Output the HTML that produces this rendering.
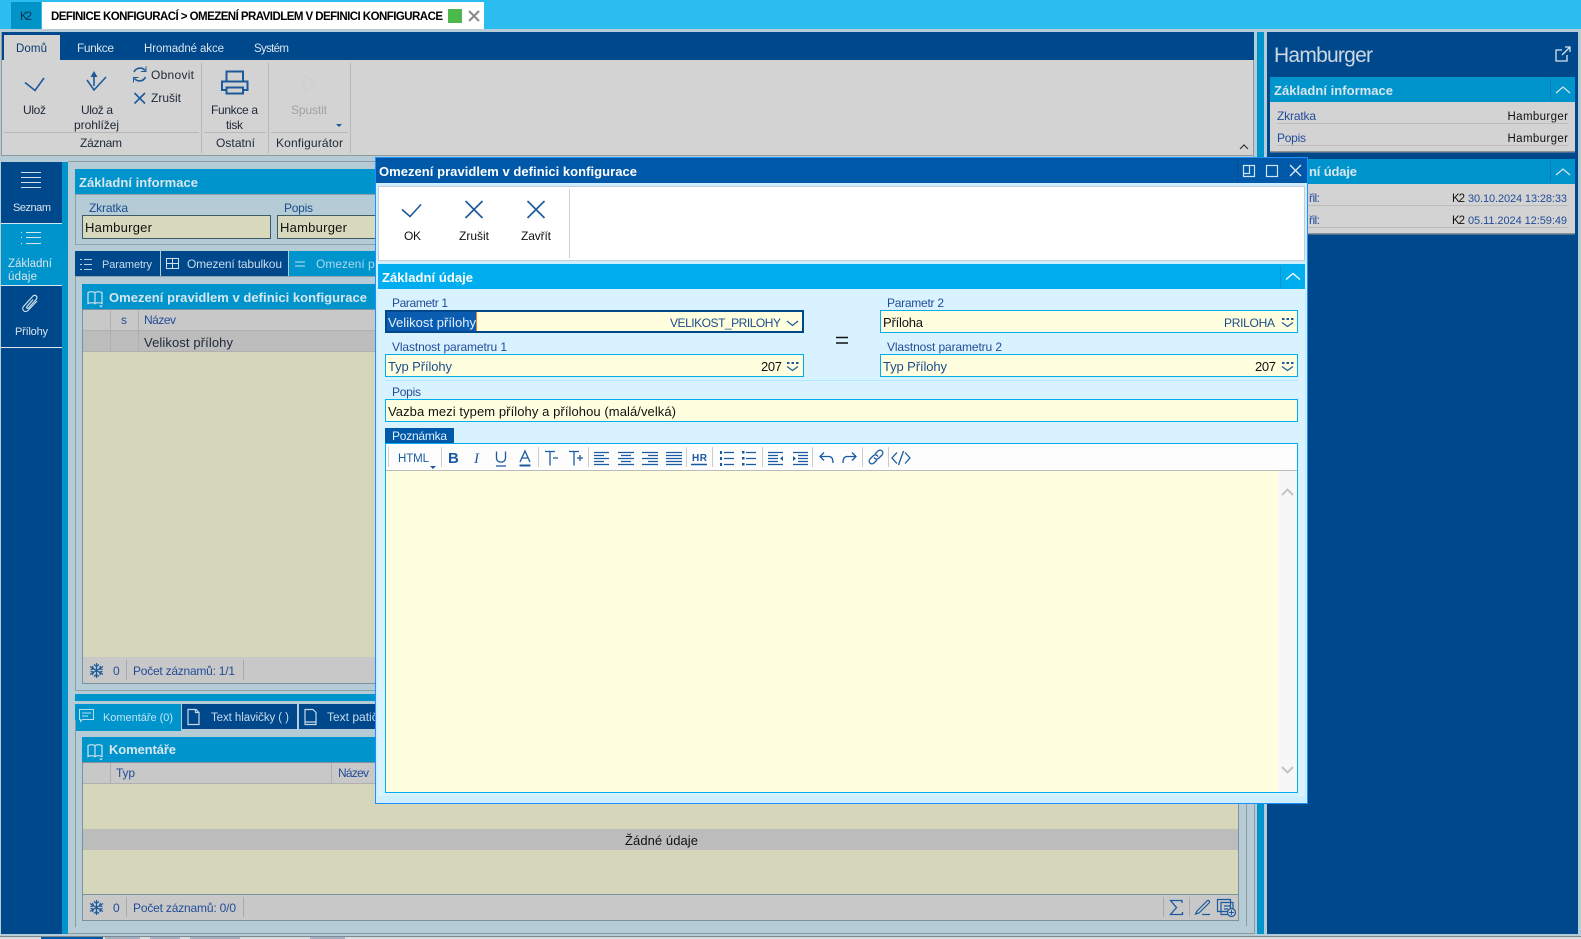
<!DOCTYPE html>
<html lang="cs"><head><meta charset="utf-8"><title>Omezení pravidlem v definici konfigurace</title>
<style>
html,body{margin:0;padding:0;width:1581px;height:939px;overflow:hidden;background:#b5cbd6}
svg{display:block}
text{font-family:"Liberation Sans",sans-serif;font-size:12px;fill:#202a3a;white-space:pre}
.b{font-weight:bold;font-size:13px;fill:#d8e6ee}
.w{font-weight:bold;font-size:13px;fill:#fff}
.l{fill:#234c98}
.n{fill:#1c4c8c}
.k{fill:#111}
.t{fill:#d8e4ec}
.m{font-size:13px}
.s{font-size:11px}
.h{font-size:11.5px}
.ic{fill:none;stroke:#1c5a9a;stroke-width:1.6}
.ie{fill:none;stroke:#1a5aa0;stroke-width:1.3}
.il{fill:none;stroke:#d0e0ea;stroke-width:1.2}
</style></head><body>
<svg width="1581" height="939" viewBox="0 0 1581 939" xmlns="http://www.w3.org/2000/svg">
<rect width="1581" height="939" fill="#b5cbd6"/>
<!-- top bar -->
<rect width="1581" height="29" fill="#2bbcf0"/>
<rect x="11" y="2" width="30" height="27" fill="#0094c8"/>
<text x="20" y="20" textLength="12" class="h" style="fill:#0a3050">K2</text>
<rect x="42" y="2" width="442" height="27" fill="#fff"/>
<text x="51" y="20" textLength="392" style="font-weight:bold;font-size:11.5px;fill:#000">DEFINICE KONFIGURACÍ &gt; OMEZENÍ PRAVIDLEM V DEFINICI KONFIGURACE</text>
<rect x="448" y="9" width="14" height="14" fill="#4cb84c"/>
<path d="M469 11l10 10M479 11l-10 10" stroke="#888" stroke-width="2" fill="none"/>
<!-- ribbon -->
<rect x="1" y="32" width="1253" height="28" fill="#00488c"/>
<rect x="1" y="60" width="1253" height="96" fill="#d3d3d3"/>
<rect x="1" y="155" width="1253" height="1" fill="#8e9a9e"/>
<rect x="1" y="32" width="1" height="124" fill="#8e9a9e"/>
<rect x="1253" y="60" width="1" height="96" fill="#8e9a9e"/>
<rect x="4" y="35" width="56" height="25" fill="#d3d3d3"/>
<text x="16" y="52" textLength="31" class="h" style="fill:#0c3a70">Domů</text>
<text x="77" y="52" textLength="37" class="t">Funkce</text>
<text x="144" y="52" textLength="80" class="t h">Hromadné akce</text>
<text x="254" y="52" textLength="35" class="t h">Systém</text>
<path d="M25 82.500L35 90.500L44 78" class="ic"/>
<path d="M87 80L94 90L106 77M94 74V86" class="ic"/><path d="M90.500 77L94 71L97.500 77Z" fill="#1c5a9a"/>
<path d="M134 72a6.500 6.500 0 0 1 11-1.500M145.500 77a6.500 6.500 0 0 1-11 1.500" class="ic"/><path d="M146 66.500v5h-5M133.500 82.500v-5h5" fill="none" stroke="#1c5a9a" stroke-width="1"/>
<path d="M134.500 93l10.500 10.500M145 93l-10.500 10.500" class="ic"/>
<path d="M226.500 81V71.500H243V81M226.500 90H222V81.500H247.500V90H243M226.500 87.500H243V93.500H226.500Z" fill="none" stroke="#1c5a9a" stroke-width="2"/>
<text x="23" y="114" textLength="23">Ulož</text>
<text x="81" y="114" textLength="32">Ulož a</text>
<text x="74" y="129" textLength="45">prohlížej</text>
<text x="151" y="79" textLength="43">Obnovit</text>
<text x="151" y="102" textLength="30">Zrušit</text>
<text x="211" y="114" textLength="47">Funkce a</text>
<text x="226" y="129" textLength="17">tisk</text>
<text x="291" y="114" textLength="36" style="fill:#a2a2a2">Spustit</text>
<path d="M304 75.500V91L317 83Z" fill="none" stroke="#cfcfcf" stroke-width="1.500"/>
<path d="M336 124h6l-3 3z" fill="#1c5a9a"/>
<text x="80" y="147" textLength="42">Záznam</text>
<text x="216" y="147" textLength="39">Ostatní</text>
<text x="276" y="147" textLength="67">Konfigurátor</text>
<path d="M4 132.500H199M204 132.500H266M271 132.500H348" stroke="#b8b8b8"/>
<path d="M201.500 63V153M268.500 63V153M350.500 63V153" stroke="#b8b8b8"/>
<path d="M1240 149l4-4 4 4" fill="none" stroke="#333" stroke-width="1.200"/>
<!-- side strip + right panel -->
<rect x="1257" y="32" width="7" height="902" fill="#0094cc"/>
<rect x="1267" y="32" width="311" height="902" fill="#00488c"/>
<text x="1274" y="62" textLength="99" style="font-size:21px;fill:#cdd8e2">Hamburger</text>
<path d="M1562 50h-6v11h11v-6M1562 55l8-8M1565 47h5v5" fill="none" stroke="#d8e4ec" stroke-width="1.300"/>
<rect x="1270" y="77" width="305" height="25" fill="#0094cc"/>
<rect x="1270" y="102" width="305" height="50" fill="#d3d3d3"/><rect x="1270" y="151" width="305" height="1.500" fill="#8a9498"/>
<text x="1274" y="95" textLength="119" class="b">Základní informace</text>
<path d="M1550.500 79V100" stroke="#0a7cb0"/><path d="M1556 93l7-6 7 6" fill="none" stroke="#d8e6ee" stroke-width="1.200"/>
<text x="1277" y="120" textLength="39" class="l">Zkratka</text><text x="1507.500" y="120" textLength="60.500" class="k h">Hamburger</text>
<text x="1277" y="142" textLength="29" class="l">Popis</text><text x="1507.500" y="142" textLength="60.500" class="k h">Hamburger</text>
<path d="M1277 123.500H1568M1277 145.500H1568" stroke="#bcbcbc"/>
<rect x="1270" y="159" width="305" height="25" fill="#0094cc"/>
<rect x="1270" y="184" width="305" height="50" fill="#d3d3d3"/><rect x="1270" y="233" width="305" height="1.500" fill="#8a9498"/>
<text x="1309" y="176" textLength="48" class="b">ní údaje</text>
<path d="M1550.500 161V182" stroke="#0a7cb0"/><path d="M1556 175l7-6 7 6" fill="none" stroke="#d8e6ee" stroke-width="1.200"/>
<text x="1309" y="202" textLength="11" class="l">řil:</text><text x="1309" y="224" textLength="11" class="l">řil:</text>
<text x="1452" y="202" textLength="13" class="k h">K2</text><text x="1468" y="202" textLength="99" class="l s">30.10.2024 13:28:33</text>
<text x="1452" y="224" textLength="13" class="k h">K2</text><text x="1468" y="224" textLength="99" class="l s">05.11.2024 12:59:49</text>
<path d="M1277 205.500H1568M1277 227.500H1568" stroke="#bcbcbc"/>
<!-- left nav -->
<rect x="1" y="162" width="61" height="772" fill="#00488c"/>
<rect x="62" y="162" width="6" height="772" fill="#0094cc"/>
<rect x="68" y="161" width="1186" height="1" fill="#8e9a9e"/>
<rect x="1" y="224" width="61" height="61" fill="#0094cc"/>
<path d="M1 223.500H62M1 285.500H62M1 347.500H62" stroke="#d8e8f0"/>
<path d="M21 172.500H41M21 177.500H41M21 182.500H41M21 187.500H41" stroke="#d0e0ea"/>
<text x="13" y="211" textLength="38" class="t s">Seznam</text>
<path d="M21 232.500h1M26 232.500H41M21 237.500h1M26 237.500H41M21 243.500h1M26 243.500H41" stroke="#d0e8f4"/>
<text x="8" y="267" textLength="44" class="t h">Základní</text><text x="8" y="280" textLength="29" class="t h">údaje</text>
<path d="M37 301l-9 9.500c-3 3-7-1-4.500-4l9-10c2-2.500 5.500-.5 4 2.500l-8 9c-1 1-2.500 0-1.500-1.500l6-7" fill="none" stroke="#d0e0ea" stroke-width="1.200"/>
<text x="15" y="335" textLength="33" class="t s">Přílohy</text>
<!-- upper panel -->
<rect x="75" y="169" width="1171" height="25" fill="#0094cc"/>
<rect x="75.500" y="194.500" width="1170" height="50" fill="none" stroke="#8ea2ac"/>
<text x="79" y="187" textLength="119" class="b">Základní informace</text>
<text x="89" y="212" textLength="39" style="fill:#1c4c8c">Zkratka</text><text x="284" y="212" textLength="29" style="fill:#1c4c8c">Popis</text>
<rect x="82.500" y="215.500" width="188" height="23" fill="#d8d8bc" stroke="#3c5c6c"/>
<rect x="277.500" y="215.500" width="188" height="23" fill="#d8d8bc" stroke="#3c5c6c"/>
<text x="85" y="232" textLength="67" class="k m">Hamburger</text><text x="280" y="232" textLength="67" class="k m">Hamburger</text>
<!-- tabs -->
<rect x="75" y="251" width="85" height="25" fill="#00488c"/>
<rect x="161" y="251" width="127" height="25" fill="#00488c"/>
<rect x="289" y="251" width="100" height="25" fill="#0094cc"/>
<path d="M80 259.500h2M84 259.500h8M80 264.500h2M84 264.500h8M80 269.500h2M84 269.500h8" stroke="#b8d0e0"/>
<text x="102" y="268" textLength="50" class="s" style="fill:#c8dcea">Parametry</text>
<path d="M166.500 258.500h12v10h-12zM166.500 263.500h12M172.500 258.500v10" fill="none" stroke="#d0e0ea"/>
<text x="187" y="268" textLength="95" style="fill:#c8dcea">Omezení tabulkou</text>
<path d="M295 262h10M295 266h10" stroke="#80c8e8" stroke-width="1.500"/>
<text x="316" y="268" style="fill:#a8d8f0">Omezení pravidlem</text>
<rect x="75.500" y="276.500" width="1170" height="414" fill="none" stroke="#8ea2ac"/>
<!-- grid 1 -->
<rect x="82" y="284" width="1157" height="25" fill="#0094cc"/>
<path d="M95 292.500c-2-1-5-1-7 0v11c2-1 5-1 7 0zm0 0c2-1 5-1 7 0v11c-2-1-5-1-7 0z" class="il"/><path d="M99 305.500h4l-2 2z" fill="#d0e0ea"/>
<text x="109" y="302" textLength="258" class="b">Omezení pravidlem v definici konfigurace</text>
<rect x="82" y="309" width="1157" height="22" fill="#c8c8c8"/>
<rect x="82" y="331" width="1157" height="21" fill="#bcbcbc"/>
<rect x="82" y="352" width="1157" height="305" fill="#d6d6bb"/>
<path d="M110.500 309V352M138.500 309V352M82 330.500H1239M82 351.500H1239" stroke="#b0b0b0"/>
<text x="121" y="324" textLength="6" class="l">s</text>
<text x="144" y="324" textLength="32" class="l">Název</text>
<text x="144" y="347" textLength="89" class="m">Velikost přílohy</text>
<rect x="82" y="657" width="1157" height="27" fill="#c8c8c8"/>
<rect x="82.500" y="309.500" width="1156" height="374" fill="none" stroke="#7c929c"/>
<path d="M96.500 663v15M90 666.500l13 8M103 666.500l-13 8M94 664.500l2.500 2 2.500-2M94 676.500l2.500-2 2.500 2M90.500 669.500l3-.5-1-3M102.500 669.500l-3-.5 1-3M90.500 671.500l3 .5-1 3M102.500 671.500l-3 .5 1 3" fill="none" stroke="#1c5a9a" stroke-width="1.200"/>
<text x="113" y="675" textLength="6" class="l">0</text>
<text x="133" y="675" textLength="102" class="l">Počet záznamů: 1/1</text>
<path d="M126.500 660V680M243.500 660V680" stroke="#aaa"/>
<!-- lower -->
<rect x="75" y="694" width="1171" height="7" fill="#0094cc"/>
<rect x="75" y="704" width="106" height="27" fill="#0094cc"/>
<rect x="182" y="704" width="115" height="25" fill="#00488c"/>
<rect x="299" y="704" width="100" height="25" fill="#00488c"/>
<path d="M79.500 709.500h14v10h-11l-2 2v-2h-1zM82 713h9M82 716h6" fill="none" stroke="#b8dcec"/>
<text x="103" y="721" textLength="70" class="s" style="fill:#c0e4f4">Komentáře (0)</text>
<path d="M188 709.500h8l3 3v12h-11zM195.500 709.500v3h3" fill="none" stroke="#c8d8e4" stroke-width="1.200"/>
<text x="211" y="721" textLength="78" class="h" style="fill:#c8dcea">Text hlavičky ( )</text>
<path d="M305 709.500h8l3 3v12h-11zM305 722h11" fill="none" stroke="#c8d8e4" stroke-width="1.200"/>
<text x="327" y="721" style="fill:#c8dcea">Text patičky ( )</text>
<rect x="82" y="737" width="1157" height="25" fill="#0094cc"/>
<path d="M95 745.500c-2-1-5-1-7 0v11c2-1 5-1 7 0zm0 0c2-1 5-1 7 0v11c-2-1-5-1-7 0z" class="il"/><path d="M99 758.500h4l-2 2z" fill="#d0e0ea"/>
<text x="109" y="754" textLength="67" class="b">Komentáře</text>
<rect x="82" y="762" width="1157" height="22" fill="#c8c8c8"/>
<rect x="82" y="784" width="1157" height="110" fill="#d6d6bb"/>
<rect x="82" y="829" width="1157" height="21" fill="#bcbcbc"/>
<path d="M110.500 762V784M331.500 762V784M82 783.500H1239" stroke="#b0b0b0"/>
<text x="116" y="777" textLength="19" class="l">Typ</text><text x="338" y="777" textLength="31" class="l">Název</text>
<text x="625" y="845" textLength="73" class="k m">Žádné údaje</text>
<rect x="82" y="894" width="1157" height="27" fill="#c8c8c8"/>
<rect x="82.500" y="762.500" width="1156" height="158" fill="none" stroke="#7c929c"/>
<path d="M82 894.500H1239" stroke="#7c929c"/>
<path d="M96.500 900v15M90 903.500l13 8M103 903.500l-13 8M94 901.500l2.500 2 2.500-2M94 913.500l2.500-2 2.500 2M90.500 906.500l3-.5-1-3M102.500 906.500l-3-.5 1-3M90.500 908.500l3 .5-1 3M102.500 908.500l-3 .5 1 3" fill="none" stroke="#1c5a9a" stroke-width="1.200"/>
<text x="113" y="912" textLength="6" class="l">0</text>
<text x="133" y="912" textLength="103" class="l">Počet záznamů: 0/0</text>
<path d="M126.500 897V917M243.500 897V917M1163.500 897V917M1189.500 897V917" stroke="#aaa"/>
<path d="M1182 903v-2.500h-11.500l6 7-6 7h12V912" fill="none" stroke="#1a5aa0" stroke-width="1.300"/>
<path d="M1197 911l10-10c1.500-1.500 3.500.5 2 2l-10 10-3.500 1zM1202 914.500h8" fill="none" stroke="#1a5aa0" stroke-width="1.200"/>
<path d="M1217.500 899.500h13v12h-13zM1221 902.500h12v12h-12zM1224 906h7M1224 909h4" fill="#c8c8c8" stroke="#1a5aa0" stroke-width="1.200"/><circle cx="1231.500" cy="912.500" r="4" fill="#c8c8c8" stroke="#1a5aa0" stroke-width="1.200"/><path d="M1229 912.500h5M1231.500 910v5" stroke="#1a5aa0"/>
<path d="M75.500 720V927M1246.500 694V926" stroke="#8e9a9e"/>
<path d="M68 933.500H1254M1254.500 156V934" stroke="#8e9a9e"/>
<!-- bottom -->
<rect y="934" width="1581" height="2" fill="#b5cbd6"/>
<rect y="936" width="1581" height="1" fill="#7e8a90"/>
<rect y="937" width="1581" height="2" fill="#d6dde0"/>
<rect x="41" y="937" width="62" height="2" fill="#0058a8"/>
<path d="M105 938H140M150 938H180M190 938H240M310 938H345" stroke="#6a80a0"/>
<!-- modal -->
<rect x="375" y="157" width="933" height="647" fill="#cceeff"/>
<rect x="375.500" y="157.500" width="932" height="646" fill="none" stroke="#1e90ff"/>
<rect x="376" y="158" width="931" height="25" fill="#0058a8"/>
<text x="379" y="176" textLength="258" class="w">Omezení pravidlem v definici konfigurace</text>
<path d="M1237.500 160V181" stroke="#0a4a90"/>
<path d="M1243.500 165.500h11v11h-11zM1243.500 173.500h6v-8" fill="none" stroke="#d0e4f4" stroke-width="1.200"/>
<rect x="1266.500" y="165.500" width="11" height="11" fill="none" stroke="#d0e4f4" stroke-width="1.200"/>
<path d="M1290 165l11 11M1301 165l-11 11" stroke="#e0ecf6" stroke-width="1.300"/>
<rect x="378.500" y="186.500" width="926" height="74" fill="#fff" stroke="#c8ccd0" stroke-width="1"/>
<path d="M569.500 189V258" stroke="#d0d0d0"/>
<path d="M402 209.500L410 216.500L421 204.500" class="ic"/>
<path d="M465.500 201l17 17M482.500 201l-17 17M527.500 201l17 17M544.500 201l-17 17" class="ic"/>
<text x="404" y="240" textLength="17" class="k">OK</text>
<text x="459" y="240" textLength="30" class="k">Zrušit</text>
<text x="521" y="240" textLength="30" class="k">Zavřít</text>
<rect x="378" y="264" width="927" height="25" fill="#00aeef"/>
<rect x="378" y="289" width="927" height="507" fill="#d8f2ff"/>
<text x="382" y="282" textLength="91" class="w">Základní údaje</text>
<path d="M1280.500 266V287" stroke="#0a94cc"/><path d="M1286 279.500l7-6 7 6" fill="none" stroke="#fff" stroke-width="1.300"/>
<text x="392" y="307" textLength="56" class="l">Parametr 1</text>
<text x="887" y="307" textLength="57" class="l">Parametr 2</text>
<rect x="386" y="311" width="417" height="21" fill="#ffffe0" stroke="#00488c" stroke-width="2"/>
<rect x="387" y="312" width="89" height="19" fill="#0a5cb0"/><rect x="476" y="312" width="1" height="19" fill="#f08020"/>
<text x="388" y="327" textLength="88" class="m" style="fill:#e4f0fa">Velikost přílohy</text>
<text x="670" y="327" textLength="111" class="n">VELIKOST_PRILOHY</text>
<path d="M787 321l5.500 4.500 5.500-4.500" fill="none" stroke="#1c5a9a" stroke-width="1.200"/>
<rect x="880.500" y="310.500" width="417" height="22" fill="#ffffe0" stroke="#00aeef"/>
<text x="883" y="327" textLength="40" class="k m">Příloha</text>
<text x="1224" y="327" textLength="51" class="n">PRILOHA</text>
<path d="M1282 322.500l5.500 4 5.500-4" fill="none" stroke="#1c5a9a" stroke-width="1.200"/><path d="M1282 318h2.500v2h-2.500zM1286.500 318h2.500v2h-2.500zM1291 318h2.500v2h-2.500z" fill="#1c5a9a"/>
<path d="M836 337.500h12M836 343h12" stroke="#111" stroke-width="1.500"/>
<text x="392" y="351" textLength="115" class="l">Vlastnost parametru 1</text>
<text x="887" y="351" textLength="115" class="l">Vlastnost parametru 2</text>
<rect x="385.500" y="354.500" width="418" height="22" fill="#ffffe0" stroke="#00aeef"/>
<text x="388" y="371" textLength="64" class="n m">Typ Přílohy</text>
<text x="761" y="371" textLength="21" class="k m">207</text>
<path d="M787 366.500l5.500 4 5.500-4" fill="none" stroke="#1c5a9a" stroke-width="1.200"/><path d="M787 362h2.500v2h-2.500zM791.500 362h2.500v2h-2.500zM796 362h2.500v2h-2.500z" fill="#1c5a9a"/>
<rect x="880.500" y="354.500" width="417" height="22" fill="#ffffe0" stroke="#00aeef"/>
<text x="883" y="371" textLength="64" class="n m">Typ Přílohy</text>
<text x="1255" y="371" textLength="21" class="k m">207</text>
<path d="M1282 366.500l5.500 4 5.500-4" fill="none" stroke="#1c5a9a" stroke-width="1.200"/><path d="M1282 362h2.500v2h-2.500zM1286.500 362h2.500v2h-2.500zM1291 362h2.500v2h-2.500z" fill="#1c5a9a"/>
<path d="M385 380.500H1298" stroke="#b0e8ff"/>
<text x="392" y="396" textLength="29" class="l">Popis</text>
<rect x="385.500" y="399.500" width="912" height="22" fill="#ffffe0" stroke="#00aeef"/>
<text x="388" y="416" textLength="288" class="k m">Vazba mezi typem přílohy a přílohou (malá/velká)</text>
<rect x="385" y="428" width="69" height="15" fill="#0058a8"/>
<text x="392" y="440" textLength="55" style="fill:#e4f0fa">Poznámka</text>
<rect x="385.500" y="443.500" width="912" height="349" fill="#ffffe0" stroke="#00aeef"/>
<rect x="386" y="444" width="911" height="26" fill="#fdfdfd"/>
<path d="M386 470.500H1297" stroke="#bbb"/>
<rect x="1278" y="471" width="18" height="321" fill="#f7f7f7"/>
<path d="M1282 495l5.500-5.500 5.500 5.500M1282 767l5.500 5.500 5.500-5.500" fill="none" stroke="#c4c4c4" stroke-width="2"/>
<path d="M388.500 447V467M441.500 447V467M538.500 447V467M588.500 447V467M686.500 447V467M712.500 447V467M762.500 447V467M812.500 447V467M862.500 447V467M888.500 447V467" stroke="#ccc"/>
<text x="398" y="462" textLength="31" class="h" style="fill:#1a5aa0">HTML</text>
<path d="M430 466h6l-3 3z" fill="#1a5aa0"/>
<text x="448" y="463" textLength="11" style="font-weight:bold;font-size:15px;fill:#1a5aa0">B</text>
<text x="474" y="463" style="font-style:italic;font-family:'Liberation Serif',serif;font-size:15px;fill:#1a5aa0">I</text>
<path d="M496.500 451.500v6.500c0 5.500 9 5.500 9 0v-6.500M496 466h10" class="ie"/>
<path d="M520 462l5-11 5 11M522 458h6" class="ie"/><path d="M519.500 464.500h11v2h-11z" fill="#1a5aa0"/>
<path d="M545 451.500h10M550 451.500v14M553 458h5" class="ie"/>
<path d="M569 451.500h10M574 451.500v14M577 458h6M580 455v6" class="ie"/>
<path d="M594 452.500h15M594 455.500h10M594 458.500h15M594 461.500h10M594 464.500h15" class="ie"/>
<path d="M618 452.500h16M621 455.500h10M618 458.500h16M621 461.500h10M618 464.500h16" class="ie"/>
<path d="M642 452.500h16M648 455.500h10M642 458.500h16M648 461.500h10M642 464.500h16" class="ie"/>
<path d="M666 452.500h16M666 455.500h16M666 458.500h16M666 461.500h16M666 464.500h16" class="ie"/>
<text x="692" y="461" textLength="15" style="font-weight:bold;font-size:10px;fill:#1a5aa0">HR</text>
<path d="M691 464.500h16" stroke="#1a5aa0" stroke-width="1.500"/>
<path d="M724 452.500h10M724 458.500h10M724 464.500h10" class="ie"/><path d="M720 451h2v3h-2zM720 457h2v3h-2zM720 463h2v3h-2z" fill="#1a5aa0"/>
<path d="M746 452.500h10M746 458.500h10M746 464.500h10" class="ie"/><path d="M742 451h2.500v2.500h-2.500zM742 457h2.500v2.500h-2.500zM742 463h2.500v2.500h-2.500z" fill="#1a5aa0"/>
<path d="M768 452.500h15M768 455.500h10M768 458.500h10M768 461.500h10M768 464.500h15" class="ie"/><path d="M783 456v5l-3-2.500z" fill="#1a5aa0"/>
<path d="M793 452.500h15M798 455.500h10M798 458.500h10M798 461.500h10M793 464.500h15" class="ie"/><path d="M793 456v5l3-2.500z" fill="#1a5aa0"/>
<path d="M824 452.500l-4 4 4 4M820 456.500h9c3 0 4 2.500 4 6.500" class="ie"/>
<path d="M852 452.500l4 4-4 4M856 456.500h-9c-3 0-4 2.500-4 6.500" class="ie"/>
<path d="M875 454l3-3c3-2.500 6.500 1 4 4l-3 3c-2 2-4 1-5-.5M877 460l-3 3c-3 2.500-6.500-1-4-4l3-3c2-2 4-1 5 .5" class="ie"/>
<path d="M897 452.500l-5 5.500 5 5.500M905 452.500l5 5.500-5 5.500M903.500 451l-5 14" class="ie"/>
</svg>
</body></html>
